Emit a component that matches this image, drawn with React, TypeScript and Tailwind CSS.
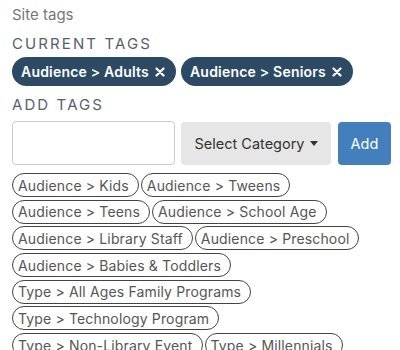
import React from "react";

const current = ["Audience > Adults", "Audience > Seniors"];
const suggestions = [
  "Audience > Kids",
  "Audience > Tweens",
  "Audience > Teens",
  "Audience > School Age",
  "Audience > Library Staff",
  "Audience > Preschool",
  "Audience > Babies & Toddlers",
  "Type > All Ages Family Programs",
  "Type > Technology Program",
  "Type > Non-Library Event",
  "Type > Millennials",
];

export default function App() {
  return (
    <div
      className="w-[400px] h-[350px] overflow-hidden bg-white px-3 pt-[4px]"
      style={{ fontFamily: "Inter, 'Open Sans', sans-serif" }}
    >
      <div className="text-[15px] leading-[22px] text-[#777]">Site tags</div>
      <div className="mt-[8px] text-[15px] leading-[20px] tracking-[2.1px] text-[#56616c]">
        CURRENT TAGS
      </div>
      <div className="mt-[3px] flex gap-[5px]">
        {current.map((t) => (
          <span
            key={t}
            className="flex h-[29px] items-center gap-[6px] rounded-full bg-[#2d4a65] pl-[9px] pr-[11px] text-[14px] font-semibold tracking-[0.2px] text-white"
          >
            {t}
            <svg width="10" height="10" viewBox="0 0 10 10">
              <path d="M1.5 1.5 L8.5 8.5 M8.5 1.5 L1.5 8.5" stroke="white" strokeWidth="2.2" strokeLinecap="round" />
            </svg>
          </span>
        ))}
      </div>
      <div className="mt-[9px] text-[15px] leading-[20px] tracking-[2.1px] text-[#56616c]">
        ADD TAGS
      </div>
      <div className="mt-[6px] flex items-start">
        <input
          className="h-[44px] w-[163px] shrink-0 rounded-[4px] border border-[#ccc] bg-white"
          aria-label="tag"
        />
        <button className="ml-[6px] mt-[1px] flex h-[43px] w-[150px] shrink-0 items-center justify-center gap-[5px] rounded-[4px] bg-[#e6e6e6] text-[14.5px] text-[#333]">
          Select Category
          <svg width="8" height="5" viewBox="0 0 8 5">
            <path d="M0 0 L8 0 L4 5 Z" fill="#333" />
          </svg>
        </button>
        <button className="ml-[7px] mt-[1px] flex h-[43px] w-[53px] shrink-0 items-center justify-center rounded-[4px] bg-[#437fbd] text-[14.5px] text-white">
          Add
        </button>
      </div>
      <div className="mt-[8px] flex flex-wrap gap-x-[2px] gap-y-[2.7px] pr-[16px]">
        {suggestions.map((s) => (
          <span
            key={s}
            className="flex h-[24px] items-center rounded-full border border-[#444] pl-[5px] pr-[9px] text-[14px] tracking-[0.15px] text-[#555]"
          >
            {s}
          </span>
        ))}
      </div>
    </div>
  );
}
